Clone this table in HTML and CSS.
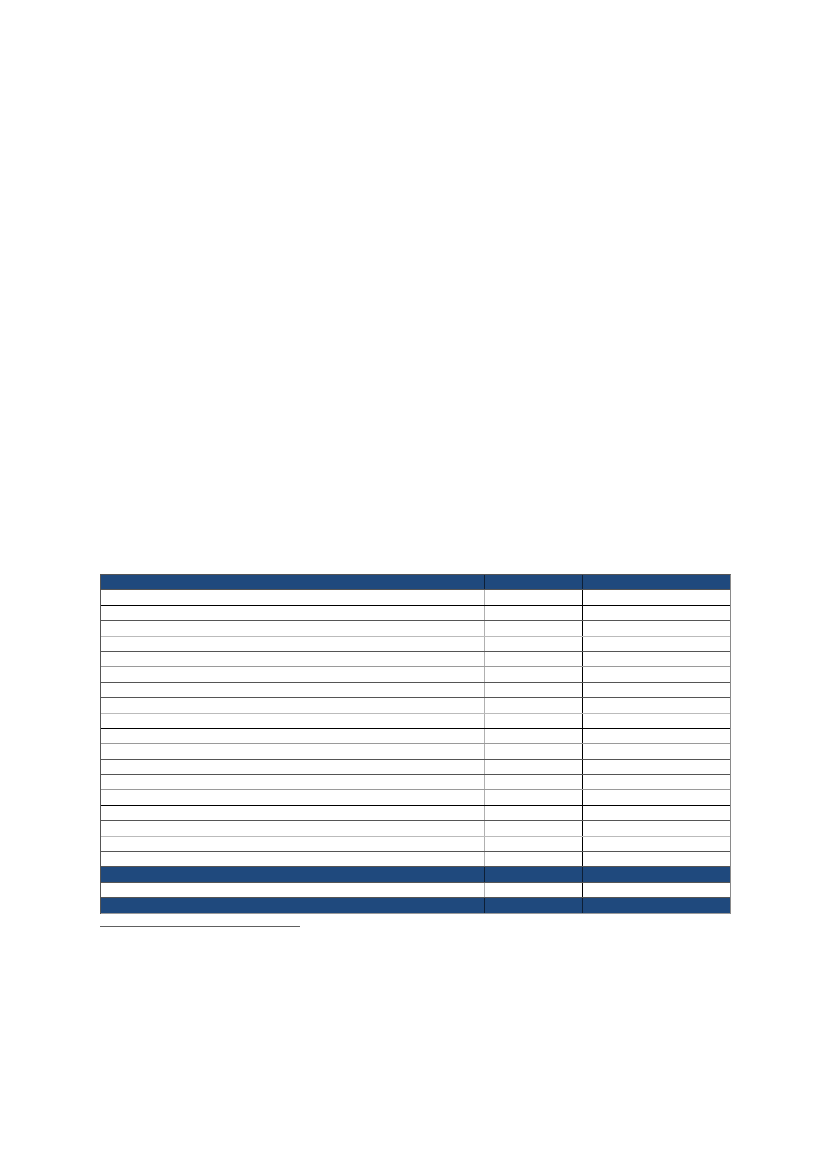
FILE: index.html
```html
<!DOCTYPE html>
<html>
<head>
<meta charset="utf-8">
<link rel="stylesheet" href="styles.css">
</head>
<body>
<div class="page">
  <div class="grid">
    <div class="row head b-dark"><div class="c1"></div><div class="c2"></div><div class="c3"></div></div>
    <div class="row b-black"><div class="c1"></div><div class="c2"></div><div class="c3"></div></div>
    <div class="row b-dark"><div class="c1"></div><div class="c2"></div><div class="c3"></div></div>
    <div class="row b-light"><div class="c1"></div><div class="c2"></div><div class="c3"></div></div>
    <div class="row b-dark"><div class="c1"></div><div class="c2"></div><div class="c3"></div></div>
    <div class="row b-mid"><div class="c1"></div><div class="c2"></div><div class="c3"></div></div>
    <div class="row b-dark"><div class="c1"></div><div class="c2"></div><div class="c3"></div></div>
    <div class="row b-dark"><div class="c1"></div><div class="c2"></div><div class="c3"></div></div>
    <div class="row b-light"><div class="c1"></div><div class="c2"></div><div class="c3"></div></div>
    <div class="row b-black"><div class="c1"></div><div class="c2"></div><div class="c3"></div></div>
    <div class="row b-mid"><div class="c1"></div><div class="c2"></div><div class="c3"></div></div>
    <div class="row b-dark"><div class="c1"></div><div class="c2"></div><div class="c3"></div></div>
    <div class="row b-dark"><div class="c1"></div><div class="c2"></div><div class="c3"></div></div>
    <div class="row b-mid"><div class="c1"></div><div class="c2"></div><div class="c3"></div></div>
    <div class="row b-black"><div class="c1"></div><div class="c2"></div><div class="c3"></div></div>
    <div class="row b-dark"><div class="c1"></div><div class="c2"></div><div class="c3"></div></div>
    <div class="row b-light"><div class="c1"></div><div class="c2"></div><div class="c3"></div></div>
    <div class="row b-dark"><div class="c1"></div><div class="c2"></div><div class="c3"></div></div>
    <div class="row b-dark"><div class="c1"></div><div class="c2"></div><div class="c3"></div></div>
    <div class="row head b-dark"><div class="c1"></div><div class="c2"></div><div class="c3"></div></div>
    <div class="row b-dark"><div class="c1"></div><div class="c2"></div><div class="c3"></div></div>
    <div class="row head b-mid"><div class="c1"></div><div class="c2"></div><div class="c3"></div></div>
  </div>
  <div class="footnote-rule"></div>
</div>
</body>
</html>
```
FILE: styles.css
```css
html, body {
  margin: 0;
  padding: 0;
  background: #ffffff;
  font-family: "Liberation Sans", Arial, sans-serif;
}
.page {
  width: 827px;
  height: 1169px;
  padding: 574px 0 0 100px;
  box-sizing: border-box;
}
.grid {
  width: 631px;
  border-top: 1px solid #555555;
  border-left: 1px solid #555555;
  border-right: 1px solid #8a8a8a;
  box-sizing: border-box;
  display: flex;
  flex-direction: column;
}
.row {
  display: grid;
  grid-template-columns: 384px 98px 1fr;
  height: 15.4px;
  box-sizing: border-box;
  border-bottom: 1px solid #555555;
}
.row .c1 { border-right: 1px solid #b0b0b0; }
.row .c2 { border-right: 1px solid #000000; }
.row.head { background: #1f497d; }
.row.head .c1, .row.head .c2 { border-right-color: #0d1f36; }
.b-black { border-bottom-color: #000000; }
.b-dark { border-bottom-color: #555555; }
.b-mid { border-bottom-color: #9a9a9a; }
.b-light { border-bottom-color: #bbbbbb; }
.footnote-rule {
  width: 200px;
  height: 0;
  border-top: 1px solid #606060;
  margin-top: 12px;
}
```
